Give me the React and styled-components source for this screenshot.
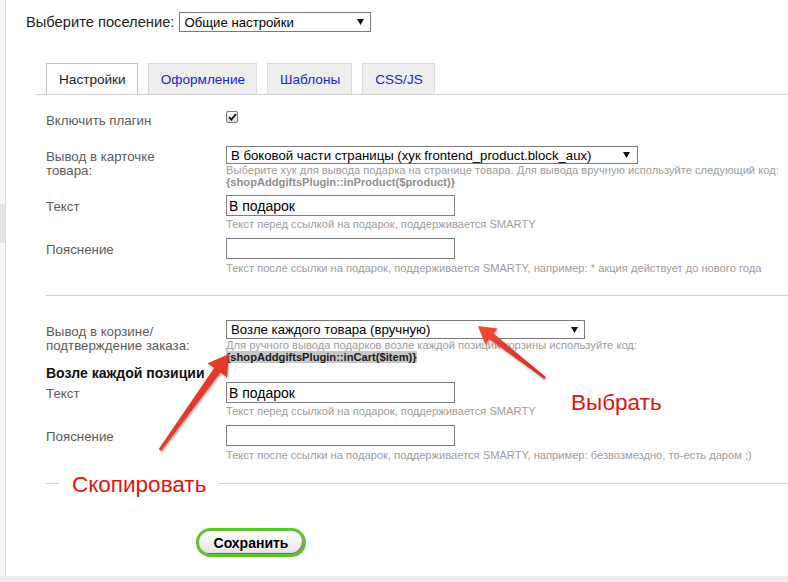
import React from 'react';
import styled, { createGlobalStyle } from 'styled-components';

const GlobalStyle = createGlobalStyle`
  html, body { margin: 0; padding: 0; background: #fff; }
  body {
    font-family: "Liberation Sans", Arial, sans-serif;
    width: 788px; height: 582px; overflow: hidden;
  }
  * { box-sizing: border-box; }
`;

const Shell = styled.div`
  position: relative;
  width: 788px;
  height: 582px;
  display: flex;
  flex-direction: column;
  background: linear-gradient(#d4d4d4, #ececec);
`;

const Body = styled.div`
  display: flex;
  height: 576px;
  background: #fff;
`;

const Sidebar = styled.div`
  width: 6px;
  flex: none;
  border-right: 1px solid #dadada;
  background: #f6f6f6;
  display: flex;
  flex-direction: column;
`;

const SideBlock = styled.div`
  margin-top: 204px;
  height: 39px;
  background: #e4e4e4;
`;

const Main = styled.main`
  flex: 1;
  padding: 12px 0 0 20px;
`;

const TopRow = styled.div`
  display: flex;
  align-items: center;
  gap: 5px;
`;

const TopLabel = styled.span`
  font-size: 14.7px;
  color: #222;
  line-height: 20px;
`;

const Select = styled.div`
  width: ${p => p.$w}px;
  height: ${p => p.$h}px;
  border: 1px solid #7b7b7b;
  background: #fff;
  display: flex;
  align-items: center;
  justify-content: space-between;
  padding: 0 ${p => p.$pr}px 0 4px;
  font-size: 13.2px;
  color: #000;
  white-space: nowrap;
`;

const Caret = () => (
  <svg width="7" height="6" viewBox="0 0 7 6">
    <path d="M0 0 H7 L3.5 6 Z" fill="#111" />
  </svg>
);

const TabBar = styled.nav`
  margin: 31px 0 0 10px;
  padding-left: 10px;
  display: flex;
  gap: 10px;
  border-bottom: 1px solid #cfcfcf;
`;

const Tab = styled.div`
  height: 31px;
  padding: 0 11px 0 12px;
  display: flex;
  align-items: center;
  font-size: 13.6px;
  border: 1px solid ${p => (p.$active ? '#c4c4c4' : '#dcdcdc')};
  border-bottom: none;
  background: ${p => (p.$active ? '#fff' : '#eeeeee')};
  color: ${p => (p.$active ? '#222' : '#2323cf')};
`;

const Form = styled.div`
  margin-left: 20px;
  padding-top: 16px;
`;

const Field = styled.div`
  display: grid;
  grid-template-columns: 180px 1fr;
  margin-top: ${p => p.$mt || 0}px;
`;

const Label = styled.div`
  width: 150px;
  font-size: 13.3px;
  color: #5c5c5c;
  line-height: ${p => p.$lh || 14}px;
  padding-top: ${p => p.$pt || 0}px;
`;

const Control = styled.div`
  display: flex;
  flex-direction: column;
  align-items: flex-start;
`;

const Check = styled.span`
  width: 12px;
  height: 12px;
  border: 1px solid #7a7a7a;
  border-radius: 2px;
  background: linear-gradient(#f8f8f8, #dcdcdc);
  display: flex;
  align-items: center;
  justify-content: center;
`;

const TextInput = styled.input`
  width: 229px;
  height: 21px;
  margin: 0;
  border: 1px solid #7e7e7e;
  padding: 0 2px;
  font: 14px "Liberation Sans", Arial, sans-serif;
  color: #000;
  background: #fff;
  outline: none;
`;

const Hint = styled.div`
  font-size: 11.15px;
  line-height: 12px;
  color: #9d9d9d;
  margin-top: ${p => p.$mt || 0}px;
  white-space: nowrap;
`;

const Code = styled.span`
  font-weight: bold;
  color: ${p => (p.$marked ? '#1c1c1c' : '#8f8f8f')};
  background: ${p => (p.$marked ? '#c6c6c6' : 'transparent')};
`;

const Divider = styled.hr`
  margin: ${p => p.$mt}px 0 0 0;
  border: none;
  border-top: 1px solid #d2d2d2;
  height: 0;
`;

const SubHeading = styled.div`
  margin-top: 2px;
  font-size: 14px;
  font-weight: bold;
  line-height: 16px;
  color: #111;
`;

const Actions = styled.div`
  margin: 44px 0 0 150px;
`;

const SaveButton = styled.button`
  width: 110px;
  height: 29px;
  border: 3px solid #5dc42d;
  border-radius: 15px;
  background: linear-gradient(#ffffff, #e4e4e4);
  box-shadow: inset -1px -1px 1px rgba(0, 0, 0, 0.55);
  font: bold 14px "Liberation Sans", Arial, sans-serif;
  color: #000;
  text-shadow: 0 1px 0 #fff;
  padding: 0;
  cursor: pointer;
`;

const Overlay = styled.svg`
  position: absolute;
  left: 0;
  top: 0;
  width: 788px;
  height: 582px;
  pointer-events: none;
`;

const Note = styled.div`
  position: absolute;
  left: ${p => p.$x}px;
  top: ${p => p.$y}px;
  padding: 0 ${p => p.$pad || 0}px;
  background: ${p => (p.$pad ? '#fff' : 'transparent')};
  font-size: 22.5px;
  line-height: 22.5px;
  color: #e0140f;
  white-space: nowrap;
`;

function CheckMark() {
  return (
    <svg width="9" height="8" viewBox="0 0 9 8">
      <path d="M1 4.2 L3.4 6.6 L8 1" stroke="#111" strokeWidth="1.8" fill="none" />
    </svg>
  );
}

export default function App() {
  return (
    <>
      <GlobalStyle />
      <Shell>
        <Body>
          <Sidebar>
            <SideBlock />
          </Sidebar>
          <Main>
            <TopRow>
              <TopLabel>Выберите поселение:</TopLabel>
              <Select $w={192} $h={20} $pr={6}>
                <span>Общие настройки</span>
                <Caret />
              </Select>
            </TopRow>

            <TabBar>
              <Tab $active>Настройки</Tab>
              <Tab>Оформление</Tab>
              <Tab>Шаблоны</Tab>
              <Tab>CSS/JS</Tab>
            </TabBar>

            <Form>
              <Field>
                <Label $lh={20}>Включить плагин</Label>
                <Control>
                  <Check>
                    <CheckMark />
                  </Check>
                </Control>
              </Field>

              <Field $mt={15}>
                <Label $pt={4}>Вывод в карточке товара:</Label>
                <Control>
                  <Select $w={412} $h={18} $pr={7}>
                    <span>В боковой части страницы (хук frontend_product.block_aux)</span>
                    <Caret />
                  </Select>
                  <Hint>
                    Выберите хук для вывода подарка на странице товара. Для вывода вручную используйте следующий код:
                  </Hint>
                  <Hint>
                    <Code>{'{shopAddgiftsPlugin::inProduct($product)}'}</Code>
                  </Hint>
                </Control>
              </Field>

              <Field $mt={7}>
                <Label $pt={2} $lh={20}>Текст</Label>
                <Control>
                  <TextInput defaultValue="В подарок" />
                  <Hint $mt={2}>Текст перед ссылкой на подарок, поддерживается SMARTY</Hint>
                </Control>
              </Field>

              <Field $mt={8}>
                <Label $pt={2} $lh={20}>Пояснение</Label>
                <Control>
                  <TextInput defaultValue="" />
                  <Hint $mt={3}>
                    Текст после ссылки на подарок, поддерживается SMARTY, например: * акция действует до нового года
                  </Hint>
                </Control>
              </Field>

              <Divider $mt={21} />

              <Field $mt={24}>
                <Label $pt={5}>Вывод в корзине/ подтверждение заказа:</Label>
                <Control>
                  <Select $w={359} $h={19} $pr={6}>
                    <span>Возле каждого товара (вручную)</span>
                    <Caret />
                  </Select>
                  <Hint>Для ручного вывода подарков возле каждой позиции корзины используйте код:</Hint>
                  <Hint>
                    <Code $marked>{'{shopAddgiftsPlugin::inCart($item)}'}</Code>
                  </Hint>
                </Control>
              </Field>

              <SubHeading>Возле каждой позиции</SubHeading>

              <Field $mt={1}>
                <Label $pt={2} $lh={20}>Текст</Label>
                <Control>
                  <TextInput defaultValue="В подарок" />
                  <Hint $mt={2}>Текст перед ссылкой на подарок, поддерживается SMARTY</Hint>
                </Control>
              </Field>

              <Field $mt={8}>
                <Label $pt={2} $lh={20}>Пояснение</Label>
                <Control>
                  <TextInput defaultValue="" />
                  <Hint $mt={3}>
                    Текст после ссылки на подарок, поддерживается SMARTY, например: безвозмездно, то-есть даром ;)
                  </Hint>
                </Control>
              </Field>

              <Divider $mt={22} />

              <Actions>
                <SaveButton type="button">Сохранить</SaveButton>
              </Actions>
            </Form>
          </Main>
        </Body>

        <Note $x={59} $y={474} $pad={13}>Скопировать</Note>
        <Note $x={571} $y={392}>Выбрать</Note>

        <Overlay viewBox="0 0 788 582">
          <defs>
            <linearGradient id="arrowFill" x1="0" y1="0" x2="1" y2="1">
              <stop offset="0" stopColor="#f04a3c" />
              <stop offset="1" stopColor="#d42a20" />
            </linearGradient>
            <filter id="arrowShadow" x="-20%" y="-20%" width="140%" height="140%">
              <feDropShadow dx="1" dy="1.5" stdDeviation="1" floodColor="#000" floodOpacity="0.35" />
            </filter>
          </defs>
          <polygon
            points="158.8,449.1 214.1,367.9 207.6,363.2 229,354 227,377.2 220.5,372.5 161.2,450.9"
            fill="url(#arrowFill)"
            filter="url(#arrowShadow)"
          />
          <polygon
            points="544.3,378.9 489.3,339.2 485.3,344.3 478,326 497.5,328.5 493.5,333.6 545.7,377.1"
            fill="url(#arrowFill)"
            filter="url(#arrowShadow)"
          />
        </Overlay>
      </Shell>
    </>
  );
}
